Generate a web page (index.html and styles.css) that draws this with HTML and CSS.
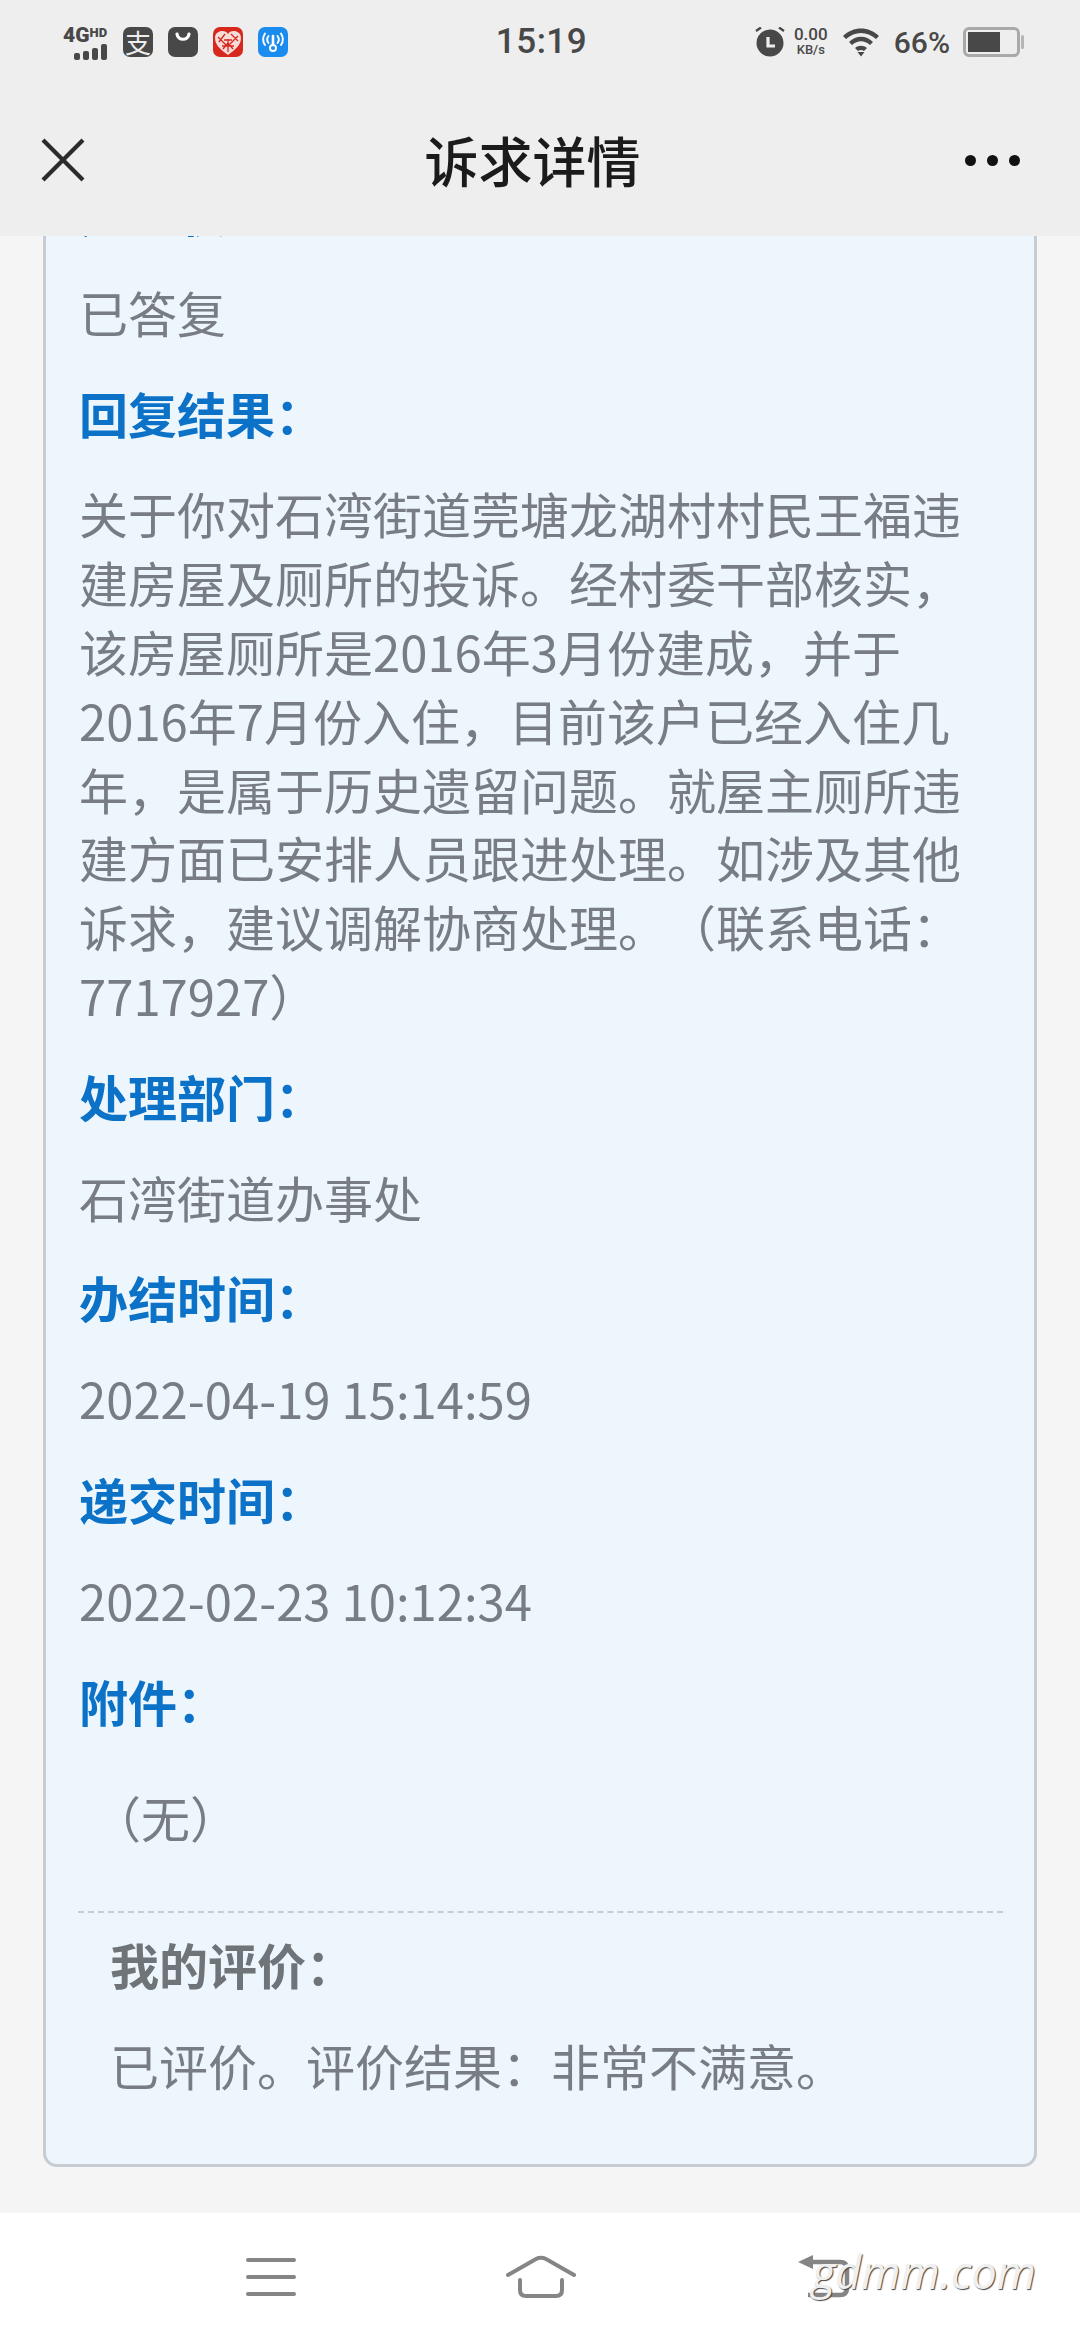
FILE: index.html
```html
<!DOCTYPE html>
<html lang="zh-CN">
<head>
  <meta charset="UTF-8">
  <title>诉求详情</title>
  <link rel="stylesheet" href="styles.css">
</head>
<body>
  <div class="phone">
    <div class="topbar">
      <div class="statusbar">
        <div class="status-left">
          <div class="signal">
            <div class="signal-text">4G<span class="signal-hd">HD</span></div>
            <div class="signal-bars"><i class="b1"></i><i class="b2"></i><i class="b3"></i><i class="b4"></i></div>
          </div>
          <div class="app-icon app-dark"><span class="zhi">支</span></div>
          <div class="app-icon app-dark">
            <svg width="30" height="30" viewBox="0 0 30 30"><path d="M9 7 C10 14 20 14 21 7" fill="none" stroke="#fff" stroke-width="3.200" stroke-linecap="round"/></svg>
          </div>
          <div class="app-icon app-red">
            <svg width="30" height="30" viewBox="0 0 30 30"><path d="M15 28 C8 23 2 18 2 11 C2 6 6 4 9 4 C12 4 14 5 15 7 C16 5 18 4 21 4 C24 4 28 6 28 11 C28 18 22 23 15 28 Z" fill="#f6dcd8"/><path d="M5 10 L13 18 M12 7 L6 15 M18 7 L25 14 M25 9 L17 17 M9 19 L21 19 M15 12 L15 25 M11 13 L19 13 M10 22 L15 16 M20 22 L15 16" stroke="#d8281e" stroke-width="1.300"/></svg>
          </div>
          <div class="app-icon app-blue">
            <svg width="30" height="30" viewBox="0 0 30 30" fill="none" stroke="#fff" stroke-width="1.900" stroke-linecap="round"><circle cx="15" cy="21" r="3"/><path d="M15 18 V9" stroke-width="2.600"/><path d="M10.500 9 C9 11 9 14 10.500 16 M19.500 9 C21 11 21 14 19.500 16 M7 6.500 C4.500 10.500 4.500 14.500 7 18 M23 6.500 C25.500 10.500 25.500 14.500 23 18"/></svg>
          </div>
        </div>
        <div class="status-time">15:19</div>
        <div class="status-right">
          <svg class="alarm" width="30" height="30" viewBox="0 0 30 30"><circle cx="15" cy="16" r="13.500" fill="#484848"/><path d="M13 10 V19 H20" fill="none" stroke="#eee" stroke-width="3.200"/><path d="M1 4 L6 0.500 M29 4 L24 0.500" stroke="#484848" stroke-width="2.400"/></svg>
          <div class="netspeed"><span class="speed-num">0.00</span><span class="speed-unit">KB/s</span></div>
          <svg class="wifi" width="36" height="30" viewBox="0 0 36 30"><path d="M0 9 C10 -1 26 -1 36 9 L33 12 C24 4 12 4 3 12 Z M6 15 C13 8 23 8 30 15 L27 18 C21 13 15 13 9 18 Z M12 21 C15.500 18 20.500 18 24 21 L21 24 C19 22.500 17 22.500 15 24 Z M14.500 25 H21.500 L18 29.500 Z" fill="#484848"/></svg>
          <div class="battery-pct">66%</div>
          <div class="battery"><div class="battery-level"></div></div>
        </div>
      </div>
      <div class="navbar">
        <svg class="close" width="44" height="44" viewBox="0 0 44 44"><path d="M2 2 L42 42 M42 2 L2 42" stroke="#2b2b2b" stroke-width="4.200"/></svg>
        <h1 class="title">诉求详情</h1>
        <div class="more"><i></i><i></i><i></i></div>
      </div>
    </div>

    <div class="content">
      <div class="card">
        <div class="label">办理状态：</div>
        <div class="value">已答复</div>
        <div class="label">回复结果：</div>
        <div class="value">关于你对石湾街道莞塘龙湖村村民王福违建房屋及厕所的投诉。经村委干部核实，该房屋厕所是2016年3月份建成，并于2016年7月份入住，目前该户已经入住几年，是属于历史遗留问题。就屋主厕所违建方面已安排人员跟进处理。如涉及其他诉求，建议调解协商处理。（联系电话：7717927）</div>
        <div class="label">处理部门：</div>
        <div class="value">石湾街道办事处</div>
        <div class="label">办结时间：</div>
        <div class="value">2022-04-19 15:14:59</div>
        <div class="label">递交时间：</div>
        <div class="value">2022-02-23 10:12:34</div>
        <div class="label">附件：</div>
        <div class="value attach">（无）</div>
        <div class="rating">
          <div class="rating-label">我的评价：</div>
          <div class="rating-value">已评价。评价结果：非常不满意。</div>
        </div>
      </div>
    </div>

    <div class="bottombar">
      <svg class="menu-icon" width="50" height="38" viewBox="0 0 50 38"><path d="M2 2 H48 M2 19 H48 M2 36 H48" stroke="#858585" stroke-width="4" stroke-linecap="round"/></svg>
      <svg class="home-icon" width="70" height="44" viewBox="0 0 70 44" fill="none" stroke="#858585" stroke-width="4" stroke-linecap="round" stroke-linejoin="round"><path d="M2 20 L30 4 Q35 1.500 40 4 L68 20"/><path d="M14 25 V35 Q14 41 20 41 H50 Q56 41 56 35 V25"/></svg>
      <svg class="back-icon" width="52" height="44" viewBox="0 0 52 44" fill="none" stroke="#858585" stroke-width="4.500"><path d="M0 7 L15 0 V14 Z" fill="#858585" stroke="none"/><path d="M12 7 H42 Q49 7 49 14 V33 Q49 40 42 40 H10"/></svg>
      <div class="watermark">gdmm.com</div>
    </div>
  </div>
</body>
</html>
```

FILE: styles.css
```css
* {
  box-sizing: border-box;
}
body {
  margin: 0;
  background: #f5f5f5;
  font-family: "Noto Sans CJK SC", "Noto Sans", sans-serif;
}
.phone {
  width: 1080px;
  height: 2340px;
  display: flex;
  flex-direction: column;
  overflow: hidden;
}

/* status bar + title */
.topbar {
  height: 236px;
  background: #eeeeee;
  position: relative;
  z-index: 2;
  flex-shrink: 0;
}
.statusbar {
  height: 84px;
  padding: 0 60px 0 63px;
  display: grid;
  grid-template-columns: 1fr auto 1fr;
  align-items: center;
  color: #484848;
}
.status-left {
  display: flex;
  align-items: center;
  gap: 15px;
}
.signal {
  margin-right: 1px;
  display: flex;
  flex-direction: column;
  align-items: flex-end;
}
.signal-text {
  font-family: Roboto, sans-serif;
  font-weight: 900;
  font-size: 21px;
  line-height: 16px;
  white-space: nowrap;
}
.signal-hd {
  font-size: 13px;
  vertical-align: 5px;
}
.signal-bars {
  display: flex;
  align-items: flex-end;
  gap: 3px;
  margin-top: 1px;
}
.signal-bars i {
  width: 6px;
  background: #484848;
  border-radius: 2px;
}
.signal-bars .b1 { height: 7px; }
.signal-bars .b2 { height: 9px; }
.signal-bars .b3 { height: 12px; }
.signal-bars .b4 { height: 16px; }
.app-icon {
  width: 30px;
  height: 30px;
  border-radius: 7px;
  display: flex;
  align-items: center;
  justify-content: center;
}
.app-dark { background: #484848; }
.app-red { background: #d8281e; }
.app-blue { background: #1a8cf0; }
.zhi {
  color: #eee;
  font-size: 26px;
  line-height: 30px;
}
.status-time {
  font-family: Roboto, sans-serif;
  font-weight: 500;
  font-size: 35px;
  letter-spacing: 0.5px;
  margin-top: -2px;
}
.status-right {
  display: flex;
  align-items: center;
  justify-content: flex-end;
}
.netspeed {
  width: 36px;
  margin: 0 14px 0 8px;
  display: flex;
  flex-direction: column;
  align-items: center;
  font-family: Roboto, sans-serif;
  font-weight: 500;
  line-height: 15px;
}
.speed-num { font-size: 17px; }
.speed-unit { font-size: 13px; }
.battery-pct {
  font-family: Roboto, sans-serif;
  font-weight: 500;
  font-size: 30px;
  margin: 0 13px 0 15px;
}
.battery {
  width: 57px;
  height: 30px;
  border: 3px solid #a9a9a9;
  border-radius: 6px;
  padding: 2px;
  position: relative;
}
.battery::after {
  content: "";
  position: absolute;
  top: 5px;
  right: -7px;
  width: 3px;
  height: 14px;
  background: #b5b5b5;
  border-radius: 2px;
}
.battery-level {
  width: 32px;
  height: 100%;
  background: #484848;
}
.navbar {
  height: 152px;
  padding: 0 60px 0 41px;
  display: flex;
  align-items: center;
  justify-content: space-between;
}
.title {
  margin: 0 0 0 15px;
  font-size: 54px;
  font-weight: 500;
  color: #1b1b1b;
  line-height: 70px;
}
.more {
  display: flex;
  gap: 11px;
}
.more i {
  width: 11px;
  height: 11px;
  border-radius: 50%;
  background: #111;
}

/* card */
.content {
  flex: 1;
  min-height: 0;
  overflow: hidden;
  background: #f5f5f5;
  padding: 0 43px;
}
.card {
  margin-top: -80px;
  height: 2011px;
  background: #edf6fd;
  border: 3px solid #c6ccd2;
  border-radius: 14px;
  padding: 18px 31px 0 33px;
  font-size: 49px;
  line-height: 68.8px;
  text-spacing-trim: space-all;
}
.label {
  color: #0b72c8;
  font-weight: 700;
  margin-bottom: 32px;
}
.value {
  color: #777d82;
  margin-bottom: 32px;
}
.attach {
  padding-left: 13px;
  margin-top: 48px;
  margin-bottom: 59px;
}
.rating {
  border-top: 2px dashed #c6ccd2;
  margin-left: -1px;
  padding-left: 32px;
  padding-top: 17px;
}
.rating-label {
  color: #6f7478;
  font-weight: 700;
  margin-bottom: 32px;
}
.rating-value {
  color: #777d82;
}

/* nav keys */
.bottombar {
  height: 127px;
  background: #fff;
  flex-shrink: 0;
  position: relative;
  display: flex;
  align-items: center;
  padding-left: 246px;
}
.home-icon {
  margin-left: 210px;
}
.back-icon {
  margin-left: 222px;
}
.watermark {
  position: absolute;
  left: 812px;
  top: 29px;
  font-family: "Open Sans", sans-serif;
  font-style: italic;
  font-size: 45px;
  line-height: 60px;
  color: #f0f0f0;
  text-shadow: 1px 1px 1px #444;
}
```
